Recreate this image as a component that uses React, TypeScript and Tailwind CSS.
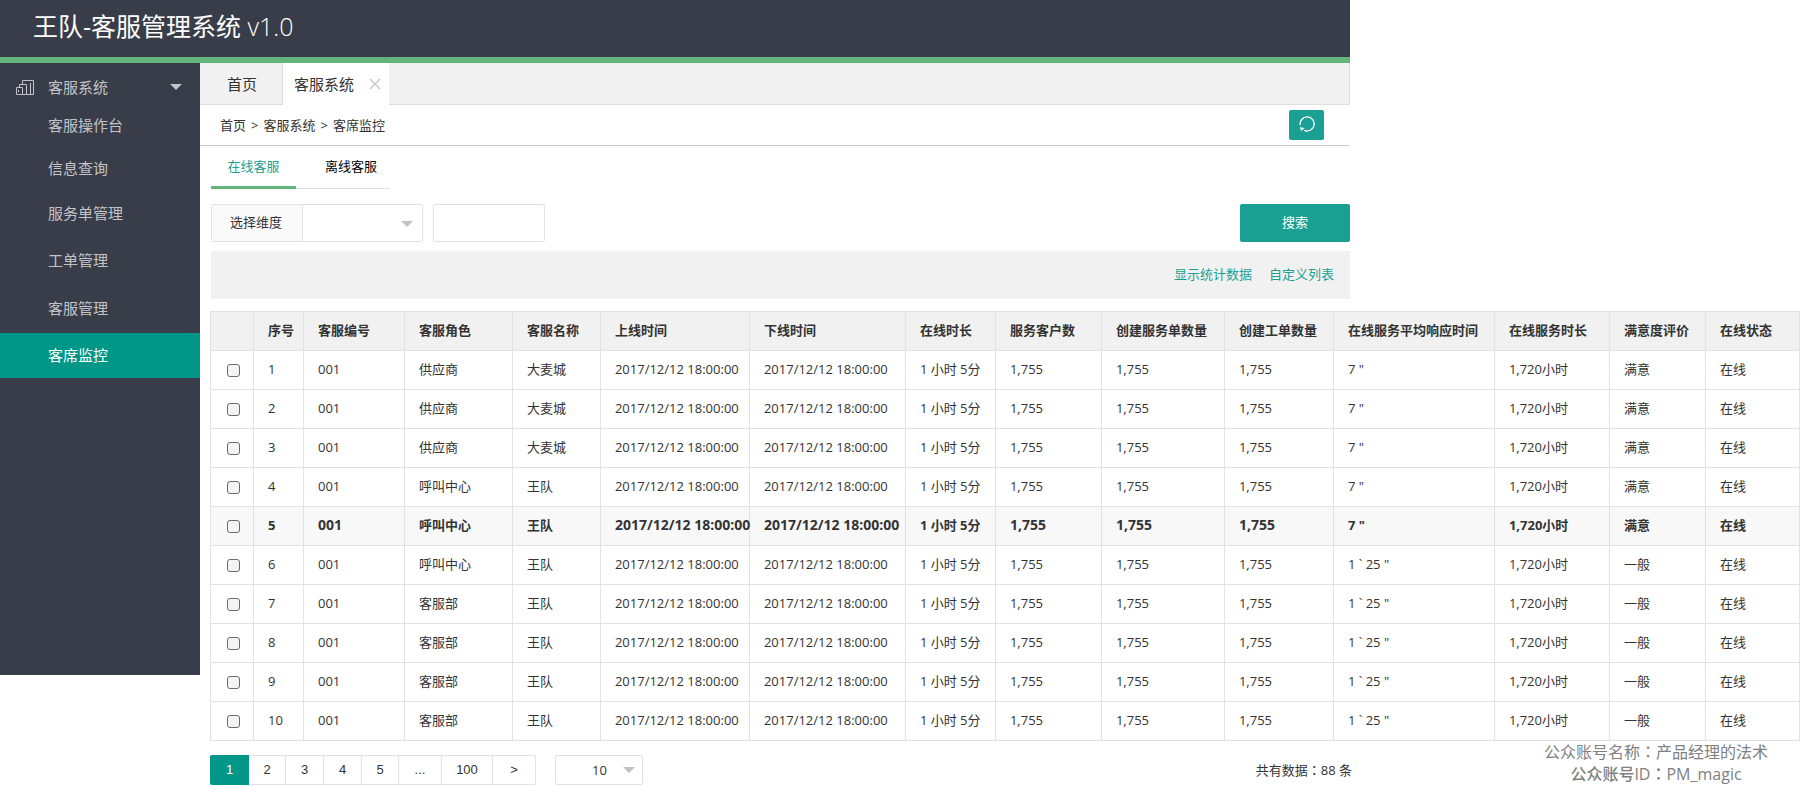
import { useState } from 'react';
import type { ReactNode } from 'react';

type Agent = {
  id: number;
  role: string;
  name: string;
  response: string;
  rating: string;
};

const menuItems = [
  { label: '客服操作台', height: 'h-[42px]' },
  { label: '信息查询', height: 'h-[43px]' },
  { label: '服务单管理', height: 'h-[47px]' },
  { label: '工单管理', height: 'h-[47px]' },
  { label: '客服管理', height: 'h-[49px]' },
  { label: '客席监控', height: 'h-[45px]' },
];

const columns = [
  { label: '', width: 43 },
  { label: '序号', width: 50 },
  { label: '客服编号', width: 101 },
  { label: '客服角色', width: 108 },
  { label: '客服名称', width: 88 },
  { label: '上线时间', width: 149 },
  { label: '下线时间', width: 156 },
  { label: '在线时长', width: 90 },
  { label: '服务客户数', width: 106 },
  { label: '创建服务单数量', width: 123 },
  { label: '创建工单数量', width: 109 },
  { label: '在线服务平均响应时间', width: 161 },
  { label: '在线服务时长', width: 115 },
  { label: '满意度评价', width: 96 },
  { label: '在线状态', width: 94 },
];

const totalWidth = columns.reduce((sum, column) => sum + column.width, 0);

const agents: Agent[] = [
  { id: 1, role: '供应商', name: '大麦城', response: '7 "', rating: '满意' },
  { id: 2, role: '供应商', name: '大麦城', response: '7 "', rating: '满意' },
  { id: 3, role: '供应商', name: '大麦城', response: '7 "', rating: '满意' },
  { id: 4, role: '呼叫中心', name: '王队', response: '7 "', rating: '满意' },
  { id: 5, role: '呼叫中心', name: '王队', response: '7 "', rating: '满意' },
  { id: 6, role: '呼叫中心', name: '王队', response: '1 ` 25 "', rating: '一般' },
  { id: 7, role: '客服部', name: '王队', response: '1 ` 25 "', rating: '一般' },
  { id: 8, role: '客服部', name: '王队', response: '1 ` 25 "', rating: '一般' },
  { id: 9, role: '客服部', name: '王队', response: '1 ` 25 "', rating: '一般' },
  { id: 10, role: '客服部', name: '王队', response: '1 ` 25 "', rating: '一般' },
];

const pages = [
  { label: '2', width: 'w-[37px]' },
  { label: '3', width: 'w-[38px]' },
  { label: '4', width: 'w-[38px]' },
  { label: '5', width: 'w-[37px]' },
  { label: '...', width: 'w-[43px]' },
  { label: '100', width: 'w-[51px]' },
  { label: '>', width: 'w-[43px]' },
];

const Caret = ({ className }: { className: string }) => (
  <svg viewBox="0 0 12 6" width="12" height="6" className={className} aria-hidden="true">
    <path d="M0 0h12L6 6z" fill="currentColor" />
  </svg>
);

const Colon = () => <span className="font-['Noto_Sans_CJK_TC',sans-serif]">：</span>;

const Header = () => (
  <header className="flex h-[63px] w-3/4 items-center border-b-[6px] border-[#64b57c] pb-1.5 pl-[33px] bg-[#393d49]">
    <h1 className="text-[25px] leading-8 font-normal whitespace-nowrap text-white">
      王队-客服管理系统 <span className="font-light">v1.0</span>
    </h1>
  </header>
);

const Sidebar = () => {
  const [active, setActive] = useState('客席监控');

  return (
    <aside className="h-[612px] w-[200px] shrink-0 bg-[#393d49] pt-2 text-[15px] text-[#c2c4c8]">
      <button type="button" className="flex h-[34px] w-full items-center pr-[18px] pb-0.5 pl-4">
        <svg viewBox="0 0 18 15" width="18" height="15" fill="none" stroke="currentColor" aria-hidden="true">
          <path d="M.5 7.5h6v7h-6zM3.5 7.5v-3h7v10h-4M6.5 4.5v-4h11v14h-7M14.5 3v11.5M2.5 10v2" />
        </svg>
        <span className="ml-3.5">客服系统</span>
        <Caret className="ml-auto" />
      </button>
      <nav>
        {menuItems.map((item) => (
          <a
            key={item.label}
            href="#"
            onClick={() => setActive(item.label)}
            className={`flex items-center pb-0.5 pl-12 ${item.height} ${
              active === item.label ? 'bg-[#009688] text-white' : ''
            }`}
          >
            {item.label}
          </a>
        ))}
      </nav>
    </aside>
  );
};

const PageTabs = () => (
  <div className="flex h-[42px] border-r border-[#dedede] bg-[#f1f1f1] text-[15px] text-[#333]">
    <button type="button" className="w-[83px] border-r border-b border-[#dedede] pl-0.5">
      首页
    </button>
    <div className="flex w-[106px] items-center bg-white pl-[11px]">
      <button type="button">客服系统</button>
      <button type="button" aria-label="关闭" className="ml-[15px] text-[#c4c4c4]">
        <svg viewBox="0 0 12 12" width="12" height="12" fill="none" stroke="currentColor" strokeWidth="1.3">
          <path d="M1 1l10 10M11 1L1 11" />
        </svg>
      </button>
    </div>
    <div className="flex-1 border-b border-[#dedede]" />
  </div>
);

const Breadcrumbs = () => (
  <div className="flex h-[41px] items-center justify-between border-b border-[#c6c9cc] pr-[26px] pl-5">
    <nav className="flex gap-[5px]">
      <a href="#">首页</a>
      <span>&gt;</span>
      <a href="#">客服系统</a>
      <span>&gt;</span>
      <span>客席监控</span>
    </nav>
    <button
      type="button"
      aria-label="刷新"
      className="flex h-[30px] w-[35px] items-center justify-center rounded-xs bg-[#1aa093] pb-0.5 text-white"
    >
      <svg viewBox="0 0 16 16" width="16" height="16" fill="none" stroke="currentColor" strokeWidth="1.3">
        <path d="M1.2 9A7 7 0 1 1 5.2 14.3" />
        <path d="M.8 11.3l5 .8-3.6 3z" fill="currentColor" stroke="none" />
      </svg>
    </button>
  </div>
);

const ActionLink = ({ children }: { children: ReactNode }) => (
  <a href="#" className="text-[#1aa093]">
    {children}
  </a>
);

const Filters = () => (
  <div className="pl-[11px]">
    <div className="flex h-[43px] text-black">
      <button type="button" className="w-[85px] border-b-[3px] border-[#64b57c] text-[#1aa093]">
        在线客服
      </button>
      <button type="button" className="w-[94px] border-b border-[#e2e2e2] pb-0.5 pl-4">
        离线客服
      </button>
    </div>
    <form className="mt-[15px] flex h-[38px] items-stretch" onSubmit={(event) => event.preventDefault()}>
      <div className="flex w-[212px] rounded-xs border border-[#e2e2e2]">
        <label
          htmlFor="dimension"
          className="flex w-[91px] items-center border-r border-[#e2e2e2] bg-[#fafafa] pb-0.5 pl-[18px]"
        >
          选择维度
        </label>
        <div className="relative flex-1">
          <select id="dimension" className="h-full w-full appearance-none bg-transparent px-3 outline-none" />
          <Caret className="pointer-events-none absolute top-4 right-[9px] text-[#c2c2c2]" />
        </div>
      </div>
      <input
        type="text"
        aria-label="关键字"
        className="ml-2.5 w-28 rounded-xs border border-[#e2e2e2] px-3 outline-none"
      />
      <button type="submit" className="ml-auto w-[110px] rounded-xs bg-[#1aa093] pb-0.5 text-white">
        搜索
      </button>
    </form>
    <div className="mt-[9px] flex h-12 items-center justify-end gap-[17px] bg-[#f1f1f1] pr-4 pb-0.5">
      <ActionLink>显示统计数据</ActionLink>
      <ActionLink>自定义列表</ActionLink>
    </div>
  </div>
);

const AgentRow = ({ agent }: { agent: Agent }) => {
  const highlighted = agent.id === 5;
  const numeric = highlighted ? 'text-sm' : '';

  return (
    <tr
      className={`h-[39px] [&>td]:border [&>td]:border-[#e2e2e2] [&>td]:pb-0.5 [&>td]:pl-3.5 ${
        highlighted ? 'bg-[#f8f8f8] font-bold' : ''
      }`}
    >
      <td>
        <input
          type="checkbox"
          aria-label={`选择 ${agent.id}`}
          className="mt-0.5 ml-0.5 block size-[13px] appearance-none rounded-[3px] border border-[#6b6b6b] bg-[#f4f4f4] checked:bg-[#009688]"
        />
      </td>
      <td>{agent.id}</td>
      <td className={numeric}>001</td>
      <td>{agent.role}</td>
      <td>{agent.name}</td>
      <td className={numeric}>2017/12/12 18:00:00</td>
      <td className={numeric}>2017/12/12 18:00:00</td>
      <td>1 小时 5分</td>
      <td className={numeric}>1,755</td>
      <td className={numeric}>1,755</td>
      <td className={numeric}>1,755</td>
      <td>{agent.response}</td>
      <td>1,720小时</td>
      <td>{agent.rating}</td>
      <td>在线</td>
    </tr>
  );
};

const AgentTable = () => (
  <table className="mt-3 w-full table-fixed border-collapse whitespace-nowrap">
    <colgroup>
      {columns.map((column) => (
        <col key={column.label} style={{ width: `${(column.width / totalWidth) * 100}%` }} />
      ))}
    </colgroup>
    <thead>
      <tr className="h-[39px] bg-[#f1f1f1]">
        {columns.map((column) => (
          <th key={column.label} className="border border-[#e2e2e2] pb-0.5 pl-3.5 text-left font-bold">
            {column.label}
          </th>
        ))}
      </tr>
    </thead>
    <tbody>
      {agents.map((agent) => (
        <AgentRow key={agent.id} agent={agent} />
      ))}
    </tbody>
  </table>
);

const Footer = () => (
  <footer className="flex">
    <div className="mt-3.5 flex w-[calc(75vw-208px)] items-start">
      <div className="flex h-[30px] font-['Liberation_Sans',sans-serif]">
        <button type="button" className="w-[39px] rounded-l-xs bg-[#009688] text-white">
          1
        </button>
        {pages.map((page) => (
          <button
            key={page.label}
            type="button"
            className={`border-y border-r border-[#e2e2e2] last:rounded-r-xs ${page.width}`}
          >
            {page.label}
          </button>
        ))}
      </div>
      <div className="relative ml-[19px] h-[30px] w-[88px]">
        <select
          aria-label="每页条数"
          className="h-full w-full appearance-none rounded-xs border border-[#e2e2e2] bg-white pl-9 outline-none"
        >
          <option>10</option>
          <option>20</option>
        </select>
        <Caret className="pointer-events-none absolute top-3 right-2 text-[#c2c2c2]" />
      </div>
      <p className="ml-auto leading-[30px]">
        共有数据
        <Colon />
        88 条
      </p>
    </div>
    <div className="flex-1 pr-8 text-base leading-[21px] whitespace-nowrap text-[#808080]">
      <div className="ml-auto w-[224px] text-center">
        <p>
          公众账号名称
          <Colon />
          产品经理的法术
        </p>
        <p className="font-medium">
          公众账号ID
          <Colon />
          PM_magic
        </p>
      </div>
    </div>
  </footer>
);

export default function App() {
  return (
    <div className="bg-white font-['Open_Sans','Noto_Sans_CJK_SC',sans-serif] text-[13px] leading-5 text-[#333]">
      <Header />
      <div className="flex items-start">
        <Sidebar />
        <main className="min-w-0 flex-1">
          <div className="w-[calc(75vw-200px)]">
            <PageTabs />
            <Breadcrumbs />
            <Filters />
          </div>
          <div className="pl-2.5">
            <AgentTable />
            <Footer />
          </div>
        </main>
      </div>
    </div>
  );
}
